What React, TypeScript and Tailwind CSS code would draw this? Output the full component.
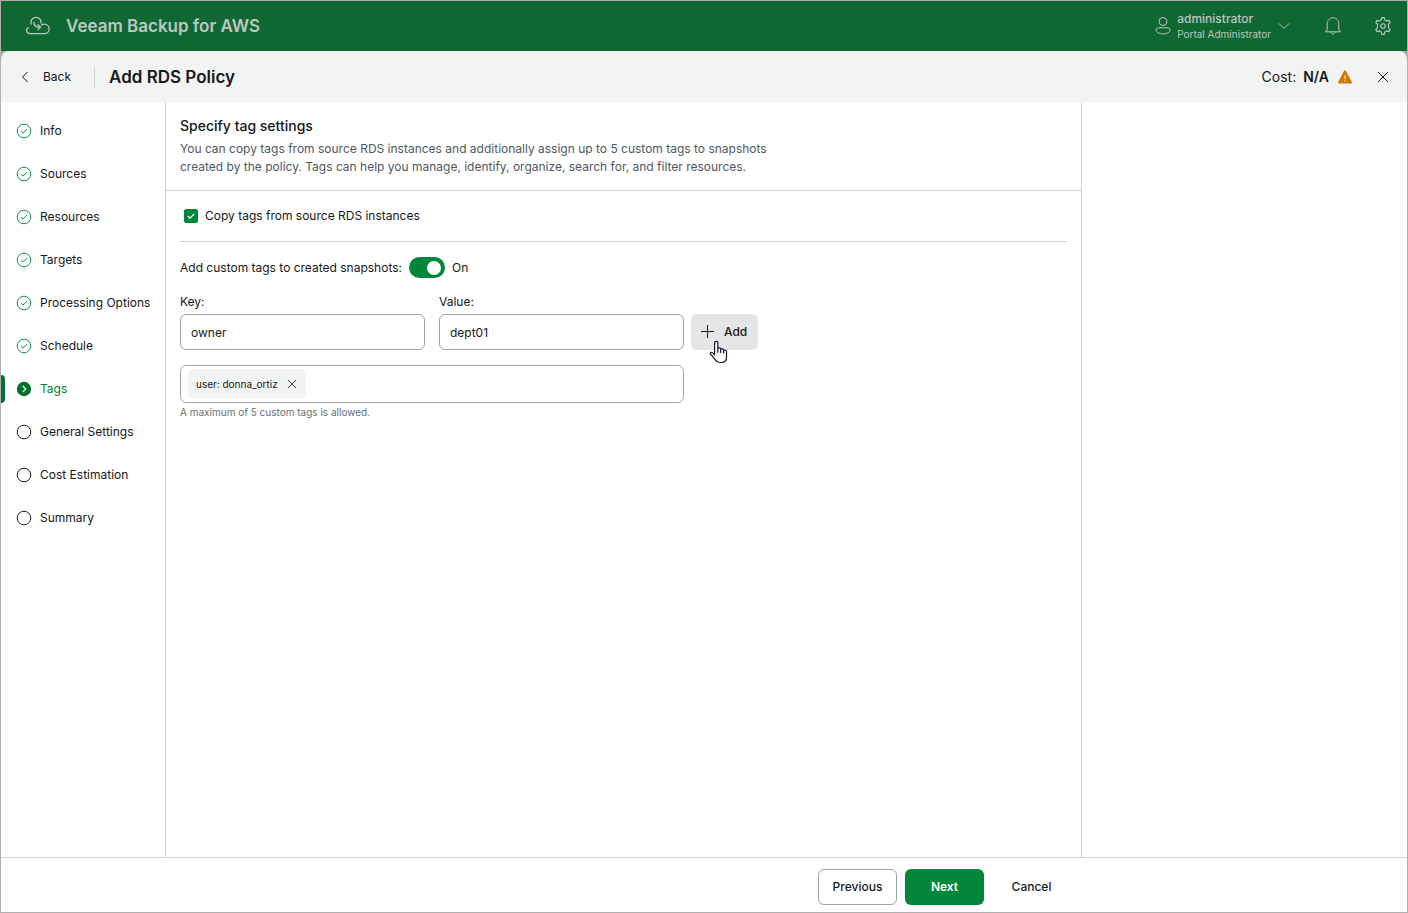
import { useState } from "react";

type StepState = "done" | "current" | "todo";

const steps: { label: string; state: StepState }[] = [
  { label: "Info", state: "done" },
  { label: "Sources", state: "done" },
  { label: "Resources", state: "done" },
  { label: "Targets", state: "done" },
  { label: "Processing Options", state: "done" },
  { label: "Schedule", state: "done" },
  { label: "Tags", state: "current" },
  { label: "General Settings", state: "todo" },
  { label: "Cost Estimation", state: "todo" },
  { label: "Summary", state: "todo" },
];

function StepIcon({ state }: { state: StepState }) {
  if (state === "current") {
    return (
      <svg className="size-4 shrink-0" viewBox="0 0 16 16" fill="none" aria-hidden="true">
        <circle cx="8" cy="8" r="7.2" fill="#00702e" />
        <path d="M6.8 5 9.8 8l-3 3" stroke="#fff" strokeWidth="1.2" />
      </svg>
    );
  }
  if (state === "done") {
    return (
      <svg className="size-4 shrink-0" viewBox="0 0 16 16" fill="none" stroke="#10924a" aria-hidden="true">
        <circle cx="8" cy="8" r="6.8" strokeWidth="1" />
        <path d="m5 8.1 2 2 4-4" strokeWidth="1" />
      </svg>
    );
  }
  return (
    <svg className="size-4 shrink-0" viewBox="0 0 16 16" fill="none" stroke="#161819" aria-hidden="true">
      <circle cx="8" cy="8" r="6.8" strokeWidth="1" />
    </svg>
  );
}

function CrossIcon({ className }: { className: string }) {
  return (
    <svg className={className} viewBox="0 0 12 12" fill="none" stroke="currentColor" aria-hidden="true">
      <path d="m1 1 10 10M11 1 1 11" />
    </svg>
  );
}

function TopBar() {
  return (
    <header className="flex h-[50px] shrink-0 items-center bg-[#0f6732] pr-[15px] pl-6 text-[#bdc7c1]">
      <svg className="h-5 w-[26px]" viewBox="0 0 26 20" fill="none" stroke="currentColor" strokeWidth="1.3" aria-hidden="true">
        <path d="M3.6 11.400C2.300 12 1.600 13 1.600 14.200c0 2 1.500 3.400 3.500 3.400h14.300c2.700 0 4.700-2 4.700-4.700S22 8.200 19.300 8.200c-1.300 0-2.400.4-3.300 1.200" />
        <path d="M6.400 8.500C6 7.800 5.900 7.100 5.900 6.300c0-2.800 2.300-5 5.100-5s5.100 2.200 5.100 5c0 .5 0 .8-.1 1.200" />
        <path d="M8.800 5.900c.2 3.200 2 5.300 5 5.300h1.400M12.500 8.300l2.900 2.900-2.900 2.900" />
      </svg>
      <span className="ml-[15px] text-[17px] leading-6 font-semibold">Veeam Backup for AWS</span>
      <button type="button" className="ml-auto flex items-center text-left">
        <svg className="mr-1.5 h-5 w-4" viewBox="0 0 16 20" fill="none" stroke="currentColor" aria-hidden="true">
          <circle cx="8" cy="5.500" r="4" />
          <path d="M1 13.900c0-1.300.8-2.100 2.100-2.100h9.800c1.300 0 2.100.8 2.100 2.100 0 2.500-3.200 4-7 4s-7-1.500-7-4Z" />
        </svg>
        <span className="flex flex-col">
          <span className="text-xs leading-4 font-medium">administrator</span>
          <span className="text-[10px] leading-[14px]">Portal Administrator</span>
        </span>
        <svg className="ml-[7px] h-2 w-3" viewBox="0 0 12 8" fill="none" stroke="currentColor" aria-hidden="true">
          <path d="m1 1.500 5 5 5-5" />
        </svg>
      </button>
      <button type="button" aria-label="Notifications" className="ml-[34px]">
        <svg className="h-5 w-[18px]" viewBox="0 0 18 20" fill="none" stroke="currentColor" aria-hidden="true">
          <path d="M3.200 14V8c0-3.600 2.500-6.300 5.800-6.300s5.800 2.700 5.800 6.300v6l1.700 1.800H1.500L3.200 14Z" strokeLinejoin="round" />
          <path d="M6.800 16c.3 1.200 1.100 1.900 2.200 1.900s1.900-.7 2.200-1.900" />
        </svg>
      </button>
      <button type="button" aria-label="Configuration" className="ml-8">
        <svg className="size-[18px]" viewBox="0 0 24 24" fill="none" stroke="currentColor" strokeWidth="1.500" strokeLinejoin="round" aria-hidden="true">
          <path d="M10.300 0.900h3.400l.7 3.200a8.200 8.200 0 0 1 2.400 1.400l3.100-1 1.700 2.900-2.400 2.200a8 8 0 0 1 0 4.800l2.400 2.200-1.700 2.900-3.100-1a8.200 8.200 0 0 1-2.400 1.400l-.7 3.200h-3.400l-.7-3.200a8.200 8.200 0 0 1-2.400-1.400l-3.100 1-1.700-2.900 2.400-2.200a8 8 0 0 1 0-4.800L2.400 7.400l1.700-2.900 3.100 1a8.200 8.200 0 0 1 2.400-1.400Z" />
          <circle cx="12" cy="12" r="3" />
        </svg>
      </button>
    </header>
  );
}

function TitleBar() {
  return (
    <div className="shrink-0 bg-[#a3aaa6]">
      <div className="flex h-[51px] items-center rounded-t-lg bg-[#f2f4f4] pr-[18px] pl-5">
        <button type="button" className="flex items-center gap-3.5 text-xs leading-5">
          <svg className="h-3 w-2" viewBox="0 0 8 12" fill="none" stroke="currentColor" aria-hidden="true">
            <path d="M6.500 1 1.500 6l5 5" />
          </svg>
          Back
        </button>
        <div className="ml-[23px] h-5 w-px bg-[#d0d4d5]" />
        <h1 className="ml-3.5 text-[17px] leading-6 font-semibold">Add RDS Policy</h1>
        <div className="ml-auto flex items-center text-sm leading-5">
          <span>Cost:</span>
          <span className="ml-[7px] font-semibold">N/A</span>
          <svg className="ml-2 size-4" viewBox="0 0 16 16" aria-hidden="true">
            <path d="M7.100 1.700a1 1 0 0 1 1.800 0l6 11.300a1 1 0 0 1-.9 1.500H2a1 1 0 0 1-.9-1.500Z" fill="#d17a00" />
            <path d="M8 6v4.200M8 11.300v1.300" stroke="#f7dcb2" strokeWidth="1.200" />
          </svg>
        </div>
        <button type="button" aria-label="Close" className="ml-6">
          <CrossIcon className="size-3" />
        </button>
      </div>
    </div>
  );
}

function Steps() {
  return (
    <nav aria-label="Wizard steps" className="w-[165px] shrink-0 border-r border-[#d0d4d5] pt-[7px]">
      <ul>
        {steps.map((step) => (
          <li key={step.label} className="relative">
            {step.state === "current" && (
              <span className="absolute top-2 left-0 h-7 w-1 rounded-r bg-[#00702e]" />
            )}
            <a
              href="#"
              aria-current={step.state === "current" ? "step" : undefined}
              className={`flex h-[43px] items-center gap-2 pl-[15px] text-xs leading-5 whitespace-nowrap ${
                step.state === "current" ? "text-[#007f35]" : ""
              }`}
            >
              <StepIcon state={step.state} />
              {step.label}
            </a>
          </li>
        ))}
      </ul>
    </nav>
  );
}

function TagSettings() {
  const [copyTags, setCopyTags] = useState(true);
  const [custom, setCustom] = useState(true);
  const [tagKey, setTagKey] = useState("owner");
  const [tagValue, setTagValue] = useState("dept01");
  const field =
    "h-9 w-[245px] rounded-md border border-[#9ca3a8] bg-white px-2.5 text-xs leading-5 outline-none";

  return (
    <main className="min-w-0 flex-1 text-xs leading-5">
      <div className="border-b border-[#d0d4d5] px-3.5 pt-3.5 pb-3.5">
        <h2 className="text-sm leading-5 font-medium">Specify tag settings</h2>
        <p className="mt-1 max-w-[600px] leading-[18px] text-[#505861]">
          You can copy tags from source RDS instances and additionally assign up to 5 custom tags to snapshots
          <br />
          created by the policy. Tags can help you manage, identify, organize, search for, and filter resources.
        </p>
      </div>
      <div className="px-3.5">
        <div className="border-b border-[#d0d4d5] pt-[15px] pb-[15px]">
          <label className="flex w-fit items-center pl-1">
            <input
              type="checkbox"
              checked={copyTags}
              onChange={(e) => setCopyTags(e.target.checked)}
              className="peer sr-only"
            />
            <span className="flex size-3.5 items-center justify-center rounded-xs border border-[#00873a] peer-checked:bg-[#00873a]">
              <svg className="size-2" viewBox="0 0 8 8" fill="none" stroke="#fff" strokeWidth="1.200" aria-hidden="true">
                <path d="m.8 4 2.100 2.100L7.200 2" />
              </svg>
            </span>
            <span className="ml-[7px]">Copy tags from source RDS instances</span>
          </label>
        </div>

        <label className="mt-[15px] flex w-fit items-center">
          Add custom tags to created snapshots:
          <input
            type="checkbox"
            role="switch"
            checked={custom}
            onChange={(e) => setCustom(e.target.checked)}
            className="peer sr-only"
          />
          <span className="ml-[7px] flex h-[21px] w-9 items-center rounded-full bg-[#8b9196] px-1 peer-checked:justify-end peer-checked:bg-[#00873a]">
            <span className="size-3.5 rounded-full bg-white" />
          </span>
          <span className="ml-[7px]">{custom ? "On" : "Off"}</span>
        </label>

        <div className="mt-3.5 flex items-end">
          <div className="flex flex-col gap-0.5">
            <label htmlFor="tag-key">Key:</label>
            <input id="tag-key" className={field} value={tagKey} onChange={(e) => setTagKey(e.target.value)} />
          </div>
          <div className="ml-3.5 flex flex-col gap-0.5">
            <label htmlFor="tag-value">Value:</label>
            <input id="tag-value" className={field} value={tagValue} onChange={(e) => setTagValue(e.target.value)} />
          </div>
          <button
            type="button"
            className="relative ml-[7px] flex h-9 items-center gap-2.5 rounded-md bg-[#e3e5e6] pr-[11px] pl-[9px] font-medium"
          >
            <svg className="size-3.5" viewBox="0 0 14 14" fill="none" stroke="currentColor" aria-hidden="true">
              <path d="M7.500 0v13M1 6.500h13" />
            </svg>
            Add
            <svg
              className="absolute top-[26px] left-[18px] h-6 w-[19px]"
              viewBox="0 0 19 24"
              fill="#fff"
              stroke="#14142b"
              strokeWidth="1.200"
              strokeLinejoin="round"
              aria-hidden="true"
            >
              <path d="M5.600 14.800V3c0-2.200 3.200-2.200 3.200 0v5.800c0-1.500 2.900-1.300 2.900.3v.6c.3-1.200 2.900-1 2.900.6v.5c.5-1 2.900-.8 2.900.9v5.600c0 3.200-2 5.200-5 5.200h-1.700c-2 0-3.400-.8-4.500-2.600L3.400 16.200 1.400 14c-.7-1.300.9-2.300 2.200-1.300Z" />
              <path d="M8.800 8.800v4M11.700 9.500v3.600M14.600 10.600v3" />
            </svg>
          </button>
        </div>

        <div className="mt-[15px] flex h-[38px] w-[504px] items-start rounded-md border border-[#9ca3a8] px-[7px] pt-[3px]">
          <span className="flex h-[29px] items-center gap-2 rounded-sm bg-[#f2f4f4] px-2 text-[10px] leading-4">
            user: donna_ortiz
            <button type="button" aria-label="Remove tag" className="px-px">
              <CrossIcon className="size-2.5" />
            </button>
          </span>
        </div>
        <p className="mt-px text-[10px] leading-4 text-[#686f75]">A maximum of 5 custom tags is allowed.</p>
      </div>
    </main>
  );
}

export default function App() {
  return (
    <div className="flex min-h-screen flex-col border border-[#b0b0b0] bg-white font-['Inter',sans-serif] text-[#161819]">
      <TopBar />
      <TitleBar />
      <div className="flex flex-1">
        <Steps />
        <TagSettings />
        <aside className="w-[326px] shrink-0 border-l border-[#d0d4d5]" />
      </div>
      <footer className="flex h-[55px] shrink-0 items-start border-t border-[#d0d4d5] pt-[11px] pr-[326px] text-xs leading-5 font-medium">
        <div className="ml-auto flex gap-2 pr-2.5">
          <button type="button" className="h-9 w-[79px] rounded-md border border-[#9ca3a8]">
            Previous
          </button>
          <button type="button" className="h-9 w-[79px] rounded-md bg-[#00873a] font-semibold text-white">
            Next
          </button>
          <button type="button" className="h-9 w-[79px] rounded-md">
            Cancel
          </button>
        </div>
      </footer>
    </div>
  );
}
